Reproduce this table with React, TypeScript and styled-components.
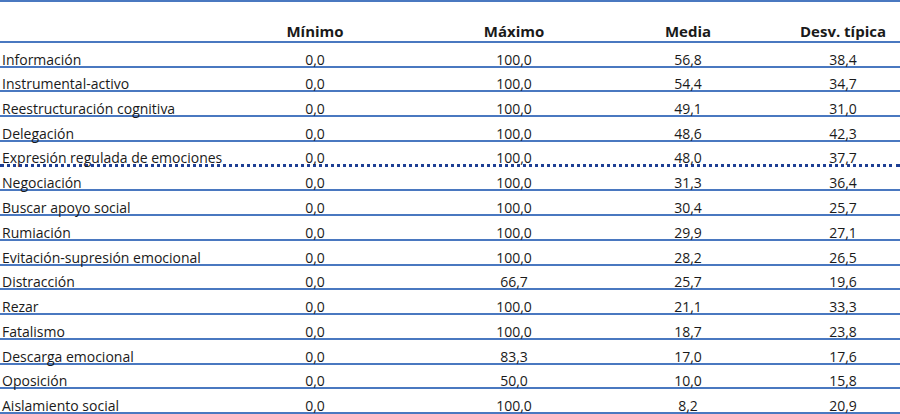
import React from 'react';
import styled, { createGlobalStyle } from 'styled-components';

const lineColor = '#4a78c0';
const dotColor = '#1e3f94';

const GlobalStyle = createGlobalStyle`
  html, body {
    margin: 0;
    padding: 0;
    background: #ffffff;
  }
  body {
    font-family: "Open Sans", "Noto Sans", "Liberation Sans", sans-serif;
    color: #1a1a1a;
  }
`;

const Table = styled.div`
  width: 900px;
  height: 414px;
  box-sizing: border-box;
  border-top: 2px solid ${lineColor};
  display: grid;
  grid-template-rows: 41px repeat(15, 1fr);
  overflow: hidden;
`;

interface RowProps {
  dotted?: boolean;
}

const Row = styled.div<RowProps>`
  display: grid;
  grid-template-columns: 192px 246px 152px 196px 114px;
  align-items: end;
  border-bottom: ${(props) =>
    props.dotted ? `3px dotted ${dotColor}` : `2px solid ${lineColor}`};
  box-sizing: border-box;
  min-height: 0;
`;

const HeaderRow = styled(Row)`
  padding-bottom: 1px;
`;

const HeadCell = styled.div`
  font-size: 15px;
  font-weight: 700;
  text-align: center;
  line-height: 17px;
`;

interface CellProps {
  label?: boolean;
}

const Cell = styled.div<CellProps>`
  font-size: 14px;
  line-height: 17px;
  white-space: nowrap;
  text-align: ${(props) => (props.label ? 'left' : 'center')};
  padding-left: ${(props) => (props.label ? '2px' : '0')};
  margin-bottom: -2px;
`;

const rows: [string, string, string, string, string][] = [
  ['Información', '0,0', '100,0', '56,8', '38,4'],
  ['Instrumental-activo', '0,0', '100,0', '54,4', '34,7'],
  ['Reestructuración cognitiva', '0,0', '100,0', '49,1', '31,0'],
  ['Delegación', '0,0', '100,0', '48,6', '42,3'],
  ['Expresión regulada de emociones', '0,0', '100,0', '48,0', '37,7'],
  ['Negociación', '0,0', '100,0', '31,3', '36,4'],
  ['Buscar apoyo social', '0,0', '100,0', '30,4', '25,7'],
  ['Rumiación', '0,0', '100,0', '29,9', '27,1'],
  ['Evitación-supresión emocional', '0,0', '100,0', '28,2', '26,5'],
  ['Distracción', '0,0', '66,7', '25,7', '19,6'],
  ['Rezar', '0,0', '100,0', '21,1', '33,3'],
  ['Fatalismo', '0,0', '100,0', '18,7', '23,8'],
  ['Descarga emocional', '0,0', '83,3', '17,0', '17,6'],
  ['Oposición', '0,0', '50,0', '10,0', '15,8'],
  ['Aislamiento social', '0,0', '100,0', '8,2', '20,9'],
];

const App: React.FC = () => (
  <>
    <GlobalStyle />
    <Table>
      <HeaderRow>
        <HeadCell />
        <HeadCell>Mínimo</HeadCell>
        <HeadCell>Máximo</HeadCell>
        <HeadCell>Media</HeadCell>
        <HeadCell>Desv. típica</HeadCell>
      </HeaderRow>
      {rows.map((r, i) => (
        <Row key={r[0]} dotted={i === 4}>
          <Cell label>{r[0]}</Cell>
          <Cell>{r[1]}</Cell>
          <Cell>{r[2]}</Cell>
          <Cell>{r[3]}</Cell>
          <Cell>{r[4]}</Cell>
        </Row>
      ))}
    </Table>
  </>
);

export default App;
